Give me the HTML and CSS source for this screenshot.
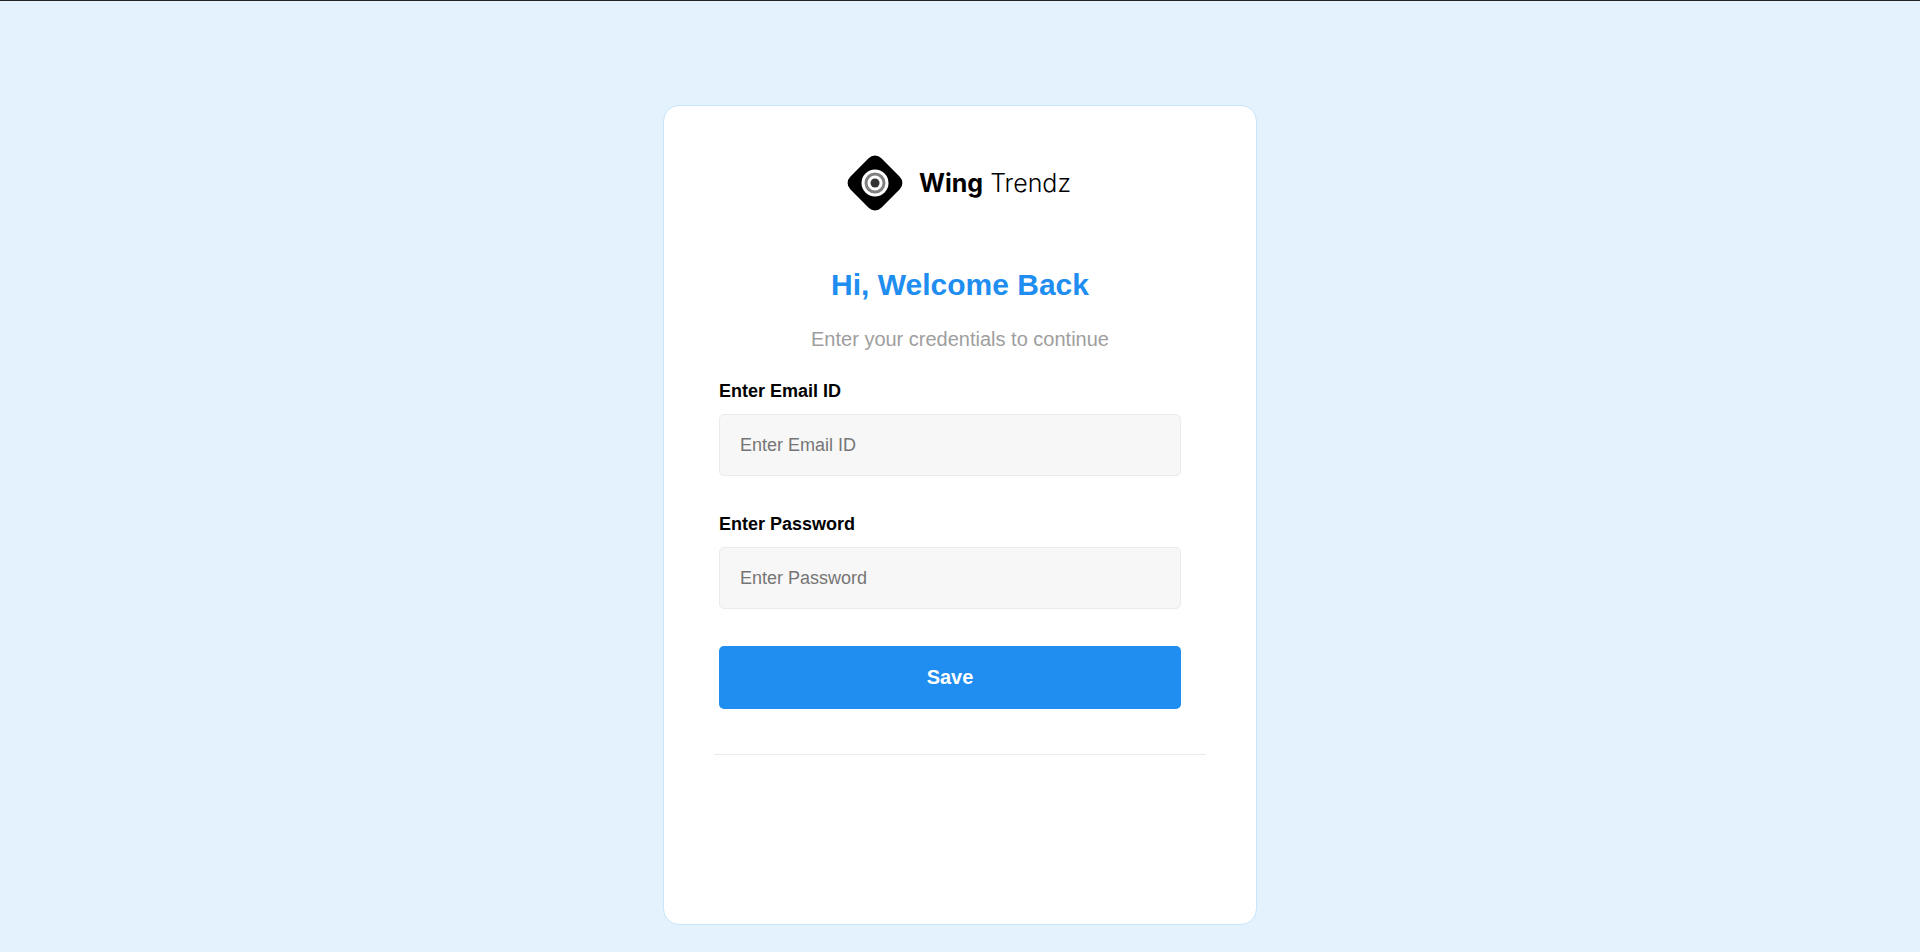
FILE: index.html
```html
<!DOCTYPE html>
<html lang="en">
<head>
    <meta charset="UTF-8">
    <meta name="viewport" content="width=device-width, initial-scale=1.0">
    <title>Wing Trendz - Login</title>
    <link rel="stylesheet" href="styles.css">
</head>
<body>
    <main class="login-page">
        <div class="login-card">
            <div class="logo">
                <svg class="logo-mark" viewBox="0 0 56 56" aria-hidden="true">
                    <rect x="6" y="6" width="44" height="44" rx="9" transform="rotate(45 28 28)" fill="#000"/>
                    <circle cx="28" cy="28" r="13.5" fill="#fff"/>
                    <circle cx="28" cy="28" r="9" fill="none" stroke="#808080" stroke-width="3"/>
                    <circle cx="28" cy="28" r="4.5" fill="#333"/>
                </svg>
                <span class="logo-text"><strong>Wing</strong> Trendz</span>
            </div>

            <h1>Hi, Welcome Back</h1>
            <p class="subtitle">Enter your credentials to continue</p>

            <form class="login-form">
                <div class="form-group">
                    <label for="email">Enter Email ID</label>
                    <input type="email" id="email" name="email" placeholder="Enter Email ID">
                </div>

                <div class="form-group">
                    <label for="password">Enter Password</label>
                    <input type="password" id="password" name="password" placeholder="Enter Password">
                </div>

                <button type="submit" class="btn">Save</button>
            </form>

            <hr class="divider">
        </div>
    </main>
</body>
</html>
```
FILE: styles.css
```css
* {
    margin: 0;
    padding: 0;
    box-sizing: border-box;
}

body {
    font-family: "Liberation Sans", Arial, sans-serif;
    background: #e3f2fd;
    color: #000;
    border-top: 1px solid #222;
    min-height: 100vh;
}

.login-page {
    display: flex;
    justify-content: center;
    padding: 104px 16px 27px;
}

.login-card {
    width: 100%;
    max-width: 594px;
    background: #fff;
    border: 1px solid #c8e6fb;
    border-radius: 16px;
    padding: 49px 50px 169px;
}

.logo {
    display: flex;
    align-items: center;
    justify-content: center;
    gap: 16px;
    padding-right: 2px;
}

.logo-mark {
    width: 56px;
    height: 56px;
}

.logo-text {
    font-family: Inter, sans-serif;
    font-size: 25px;
    font-weight: 300;
}

.logo-text strong {
    font-weight: 700;
}

h1 {
    margin-top: 56px;
    font-size: 30px;
    line-height: 36px;
    text-align: center;
    color: #208df0;
}

.subtitle {
    margin-top: 24px;
    font-size: 20px;
    line-height: 24px;
    text-align: center;
    color: #9e9e9e;
}

.login-form {
    padding: 29px 25px 0 5px;
}

.form-group {
    margin-bottom: 37px;
}

label {
    display: block;
    margin-bottom: 12px;
    font-size: 18px;
    line-height: 22px;
    font-weight: 700;
}

input {
    display: block;
    width: 100%;
    height: 62px;
    padding: 0 20px;
    font-family: inherit;
    font-size: 18px;
    background: #f7f7f7;
    border: 1px solid #ebebeb;
    border-radius: 5px;
}

input::placeholder {
    color: #757575;
}

input:focus {
    outline: none;
    border-color: #208df0;
}

.btn {
    display: block;
    width: 100%;
    height: 63px;
    font-family: inherit;
    font-size: 20px;
    font-weight: 700;
    color: #fff;
    background: #208df0;
    border: none;
    border-radius: 5px;
    cursor: pointer;
}

.divider {
    margin-top: 45px;
    border: none;
    border-top: 1px solid #ebebeb;
}
```
